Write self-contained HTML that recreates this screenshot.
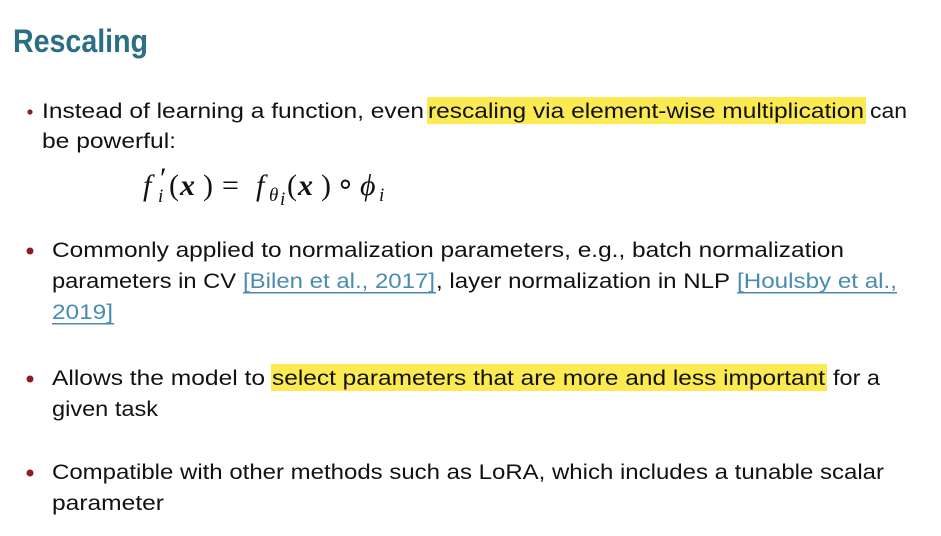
<!DOCTYPE html>
<html><head><meta charset="utf-8"><style>
html,body{margin:0;padding:0;background:#fff;width:941px;height:536px;overflow:hidden}
svg{display:block}
text{font-family:"Liberation Sans",sans-serif;font-size:21px;fill:#111}
.l{fill:#4a8bb0}
.m{font-family:"Liberation Serif",serif;font-size:30px;fill:#111}
.mi{font-family:"Liberation Serif",serif;font-size:30px;font-style:italic;fill:#111}
.mb{font-family:"Liberation Serif",serif;font-size:30px;font-style:italic;font-weight:bold;fill:#111}
.s{font-family:"Liberation Serif",serif;font-size:19px;font-style:italic;fill:#111}
</style></head><body>
<svg width="941" height="536" viewBox="0 0 941 536">
<text x="13" y="52" style="font-size:32px;font-weight:bold;fill:#2c6e84" textLength="135" lengthAdjust="spacingAndGlyphs">Rescaling</text>

<circle cx="30" cy="112" r="2.6" fill="#8b1f1f"/>
<rect x="427" y="97" width="439" height="27" fill="#fbea52"/>
<text x="42" y="118" textLength="382" lengthAdjust="spacingAndGlyphs">Instead of learning a function, even</text>
<text x="428" y="118" textLength="436" lengthAdjust="spacingAndGlyphs">rescaling via element-wise multiplication</text>
<text x="870" y="118" textLength="37" lengthAdjust="spacingAndGlyphs">can</text>
<text x="42" y="148" textLength="134" lengthAdjust="spacingAndGlyphs">be powerful:</text>

<text class="mi" x="143" y="195">f</text>
<text class="m" x="160" y="188" font-size="20">′</text>
<text class="s" x="158" y="202">i</text>
<text class="m" x="169" y="195">(</text>
<text class="mb" x="180" y="195">x</text>
<text class="m" x="203" y="195">)</text>
<text class="m" x="222" y="195">=</text>
<text class="mi" x="256" y="195">f</text>
<text class="s" x="269" y="201">θ</text>
<text class="s" x="280" y="205" font-size="13">i</text>
<text class="m" x="287" y="195">(</text>
<text class="mb" x="298" y="195">x</text>
<text class="m" x="321" y="195">)</text>
<text class="m" x="336" y="194" font-size="26">∘</text>
<text class="mi" x="360" y="195">ϕ</text>
<text class="s" x="379" y="201">i</text>

<circle cx="30" cy="251" r="3.5" fill="#8b1f1f"/>
<text x="52" y="257" textLength="792" lengthAdjust="spacingAndGlyphs">Commonly applied to normalization parameters, e.g., batch normalization</text>
<text x="52" y="288" textLength="184" lengthAdjust="spacingAndGlyphs">parameters in CV</text>
<text class="l" x="243" y="288" textLength="192" lengthAdjust="spacingAndGlyphs">[Bilen et al., 2017]</text>
<rect x="243" y="292" width="193" height="1.5" fill="#4a8bb0"/>
<text x="436" y="288" textLength="294" lengthAdjust="spacingAndGlyphs">, layer normalization in NLP</text>
<text class="l" x="737" y="288" textLength="160" lengthAdjust="spacingAndGlyphs">[Houlsby et al.,</text>
<rect x="737" y="292" width="160" height="1.5" fill="#4a8bb0"/>
<text class="l" x="52" y="319" textLength="61" lengthAdjust="spacingAndGlyphs">2019]</text>
<rect x="52" y="323" width="62" height="1.5" fill="#4a8bb0"/>

<circle cx="30" cy="379" r="3.5" fill="#8b1f1f"/>
<rect x="271" y="364" width="556" height="27" fill="#fbea52"/>
<text x="52" y="385" textLength="213" lengthAdjust="spacingAndGlyphs">Allows the model to</text>
<text x="272" y="385" textLength="553" lengthAdjust="spacingAndGlyphs">select parameters that are more and less important</text>
<text x="833" y="385" textLength="47" lengthAdjust="spacingAndGlyphs">for a</text>
<text x="52" y="416" textLength="106" lengthAdjust="spacingAndGlyphs">given task</text>

<circle cx="30" cy="473" r="3.5" fill="#8b1f1f"/>
<text x="52" y="479" textLength="832" lengthAdjust="spacingAndGlyphs">Compatible with other methods such as LoRA, which includes a tunable scalar</text>
<text x="52" y="510" textLength="112" lengthAdjust="spacingAndGlyphs">parameter</text>
</svg>
</body></html>
